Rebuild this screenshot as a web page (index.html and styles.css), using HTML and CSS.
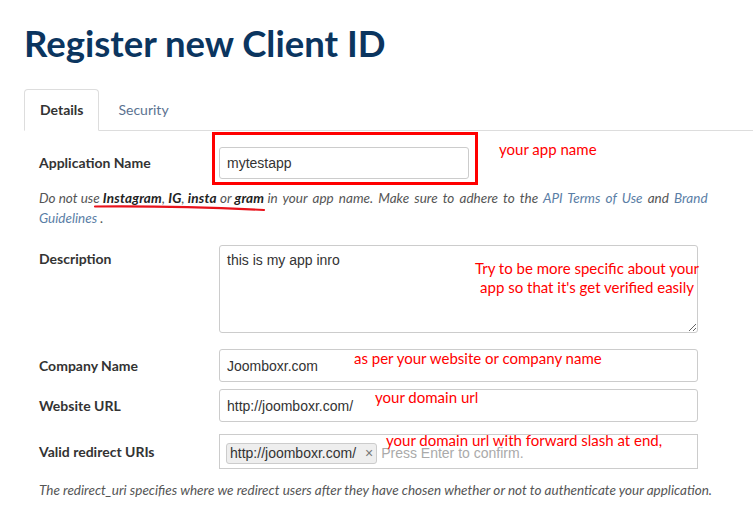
FILE: index.html
```html
<!DOCTYPE html>
<html lang="en">
<head>
    <meta charset="UTF-8">
    <meta name="viewport" content="width=device-width, initial-scale=1.0">
    <title>Register new Client ID</title>
    <link rel="stylesheet" href="styles.css">
</head>
<body>
    <div class="page">
        <h1 class="page-title">Register new Client ID</h1>

        <ul class="tabs">
            <li class="tab active">Details</li>
            <li class="tab">Security</li>
        </ul>

        <form class="client-form">
            <div class="row row-app">
                <label class="label">Application Name</label>
                <div class="field">
                    <span class="boxed">
                        <input class="input input-short" type="text" value="mytestapp">
                    </span>
                    <span class="note note-app">your app name</span>
                </div>
            </div>

            <div class="help-wrap">
                <p class="help help-app">Do not use <b>Instagram</b>, <b>IG</b>, <b>insta</b> or <b>gram</b> <span class="tail">in your app name. Make sure to adhere to the <a href="#">API Terms of Use</a> and <a href="#">Brand</a></span> <a href="#">Guidelines</a> .</p>
                <svg class="scribble" width="176" height="8" viewBox="0 0 176 8"><path d="M2 2.5 C 50 2, 110 3, 171 6" stroke="#e8121b" stroke-width="2.2" fill="none" stroke-linecap="round"/></svg>
            </div>

            <div class="row row-desc">
                <label class="label label-top">Description</label>
                <div class="field">
                    <textarea class="input textarea">this is my app inro</textarea>
                    <span class="note note-desc">Try to be more specific about your<br>app so that it's get verified easily</span>
                </div>
            </div>

            <div class="row row-company">
                <label class="label">Company Name</label>
                <div class="field">
                    <input class="input" type="text" value="Joomboxr.com">
                    <span class="note note-company">as per your website or company name</span>
                </div>
            </div>

            <div class="row row-website">
                <label class="label">Website URL</label>
                <div class="field">
                    <input class="input" type="text" value="http://joomboxr.com/">
                    <span class="note note-website">your domain url</span>
                </div>
            </div>

            <div class="row row-redirect">
                <label class="label">Valid redirect URIs</label>
                <div class="field">
                    <div class="tag-input">
                        <span class="tag">http://joomboxr.com/ <span class="tag-close">×</span></span>
                        <span class="placeholder">Press Enter to confirm.</span>
                    </div>
                    <span class="note note-redirect">your domain url with forward slash at end,</span>
                </div>
            </div>

            <p class="help help-redirect">The redirect_uri specifies where we redirect users after they have chosen whether or not to authenticate your application.</p>
        </form>
    </div>
</body>
</html>
```

FILE: styles.css
```css
* {
    margin: 0;
    padding: 0;
    box-sizing: border-box;
}

body {
    background: #fff;
    font-family: "Lato", "Open Sans", sans-serif;
    color: #333;
}

.page {
    padding-left: 24px;
}

.page-title {
    margin-top: 21px;
    font-size: 36.5px;
    line-height: 44px;
    font-weight: 700;
    color: #0b355f;
}

/* Abas */
.tabs {
    display: flex;
    list-style: none;
    margin-top: 24px;
    border-bottom: 1px solid #ddd;
}

.tab {
    height: 42px;
    padding: 0 15px;
    margin-right: 3px;
    margin-bottom: -1px;
    border: 1px solid transparent;
    border-radius: 4px 4px 0 0;
    font-size: 14px;
    line-height: 40px;
    color: #5b7290;
}

.tab.active {
    border-color: #ddd;
    border-bottom-color: #fff;
    font-weight: 700;
    color: #333;
}

/* Formulario */
.client-form {
    padding-left: 15px;
}

.row {
    display: grid;
    grid-template-columns: 180px 479px;
    align-items: center;
}

.label {
    font-size: 14px;
    font-weight: 700;
    line-height: 20px;
    color: #333;
}

.label-top {
    align-self: start;
    padding-top: 4px;
}

.field {
    position: relative;
}

.input {
    display: block;
    width: 100%;
    height: 33px;
    padding: 0 7px;
    border: 1px solid #ccc;
    border-radius: 3px;
    font-family: "Liberation Sans", Arial, sans-serif;
    font-size: 14px;
    color: #333;
    background: #fff;
    outline: none;
}

.input-short {
    width: 250px;
    height: 32px;
}

.textarea {
    height: 88px;
    padding: 6px 7px;
    line-height: 16px;
    resize: vertical;
}

.row-app { margin-top: 16px; }
.row-desc { margin-top: 17px; }
.row-company { margin-top: 16px; }
.row-website { margin-top: 7px; }
.row-redirect { margin-top: 12px; }

/* Caixa vermelha em volta do nome */
.boxed {
    position: relative;
    display: inline-block;
    vertical-align: top;
}

.boxed::after {
    content: "";
    position: absolute;
    top: -15px;
    left: -7px;
    right: -9px;
    bottom: -6px;
    border: 3px solid #f00;
    pointer-events: none;
}

.help {
    font-size: 13.5px;
    font-style: italic;
    line-height: 20px;
    color: #555;
    max-width: 700px;
}

.help b {
    font-weight: 700;
    color: #222;
    letter-spacing: 0.2px;
}

.help a {
    color: #5a7ea6;
    text-decoration: none;
}

.help .tail {
    word-spacing: 2px;
}

.help-wrap {
    position: relative;
    margin-top: 9px;
}

.help-redirect { margin-top: 11px; }

/* Risco vermelho feito a mao */
.scribble {
    position: absolute;
    left: 54px;
    top: 16px;
}

/* Campo de tags */
.tag-input {
    display: flex;
    align-items: center;
    height: 35px;
    padding: 3px 6px 0;
    border: 1px solid #ccc;
    font-family: "Liberation Sans", Arial, sans-serif;
    font-size: 14px;
}

.tag {
    height: 21px;
    padding: 0 3px;
    margin-right: 4px;
    border: 1px solid #ccc;
    border-radius: 3px;
    background: #eee;
    line-height: 19px;
    color: #333;
    white-space: nowrap;
}

.tag-close {
    margin-left: 5px;
    font-size: 14px;
    color: #777;
}

.placeholder {
    color: #aaa;
    white-space: nowrap;
}

/* Anotacoes em vermelho */
.note {
    position: absolute;
    font-size: 15px;
    line-height: 19px;
    color: #f00;
    white-space: nowrap;
}

.note-app { left: 280px; top: -7px; }
.note-desc { left: 256px; top: 14px; text-align: center; }
.note-company { left: 135px; top: 0; }
.note-website { left: 156px; top: -1px; }
.note-redirect { left: 167px; top: -3px; }
```
